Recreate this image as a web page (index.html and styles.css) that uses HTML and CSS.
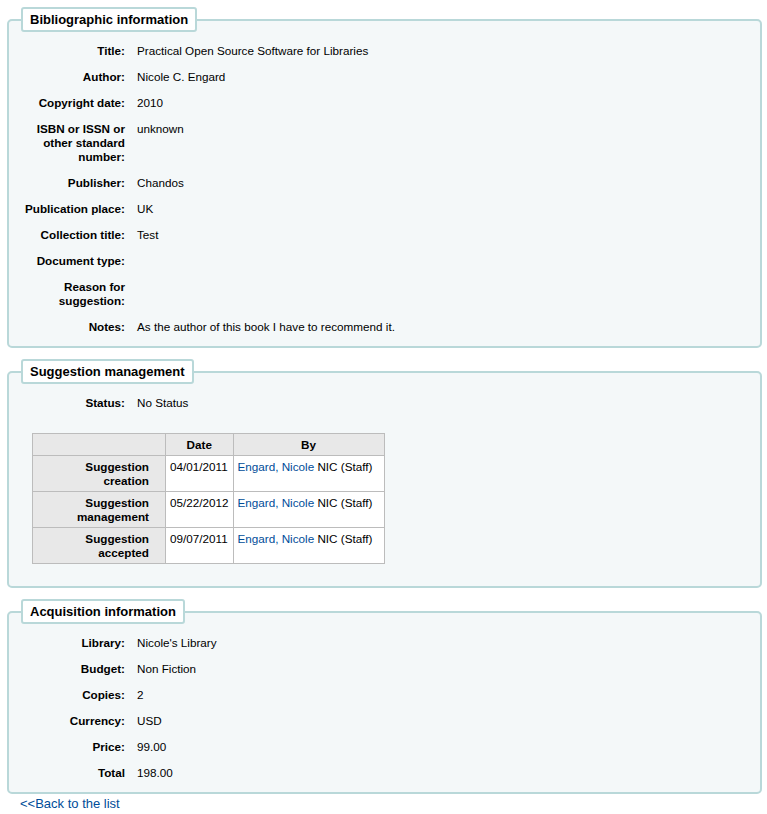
FILE: index.html
```html
<!DOCTYPE html>
<html>
<head>
  <title>Suggestion detail</title>
  <link rel="stylesheet" href="styles.css">
</head>
<body>
  <div class="page">
    <fieldset class="rows">
      <legend>Bibliographic information</legend>
      <ol>
        <li><span class="label">Title:</span><span>Practical Open Source Software for Libraries</span></li>
        <li><span class="label">Author:</span><span>Nicole C. Engard</span></li>
        <li><span class="label">Copyright date:</span><span>2010</span></li>
        <li><span class="label">ISBN or ISSN or other standard number:</span><span>unknown</span></li>
        <li><span class="label">Publisher:</span><span>Chandos</span></li>
        <li><span class="label">Publication place:</span><span>UK</span></li>
        <li><span class="label">Collection title:</span><span>Test</span></li>
        <li><span class="label">Document type:</span><span></span></li>
        <li><span class="label">Reason for suggestion:</span><span></span></li>
        <li><span class="label">Notes:</span><span>As the author of this book I have to recommend it.</span></li>
      </ol>
    </fieldset>

    <fieldset class="rows">
      <legend>Suggestion management</legend>
      <ol>
        <li><span class="label">Status:</span><span>No Status</span></li>
      </ol>
      <table class="history">
        <thead>
          <tr><th class="empty"></th><th>Date</th><th class="by">By</th></tr>
        </thead>
        <tbody>
          <tr>
            <th>Suggestion creation</th>
            <td>04/01/2011</td>
            <td><a href="#">Engard, Nicole</a> NIC (Staff)</td>
          </tr>
          <tr>
            <th>Suggestion management</th>
            <td>05/22/2012</td>
            <td><a href="#">Engard, Nicole</a> NIC (Staff)</td>
          </tr>
          <tr>
            <th>Suggestion accepted</th>
            <td>09/07/2011</td>
            <td><a href="#">Engard, Nicole</a> NIC (Staff)</td>
          </tr>
        </tbody>
      </table>
    </fieldset>

    <fieldset class="rows">
      <legend>Acquisition information</legend>
      <ol>
        <li><span class="label">Library:</span><span>Nicole's Library</span></li>
        <li><span class="label">Budget:</span><span>Non Fiction</span></li>
        <li><span class="label">Copies:</span><span>2</span></li>
        <li><span class="label">Currency:</span><span>USD</span></li>
        <li><span class="label">Price:</span><span>99.00</span></li>
        <li><span class="label">Total</span><span>198.00</span></li>
      </ol>
    </fieldset>

    <a class="back" href="#">&lt;&lt;Back to the list</a>
  </div>
</body>
</html>
```

FILE: styles.css
```css
body {
  margin: 0;
  font-family: "Liberation Sans", Arial, sans-serif;
  font-size: 11.7px;
  color: #000;
  background-color: white;
}
.page {
  padding: 7px 5px 0 7px;
}
a {
  color: #004d99;
  text-decoration: none;
}
fieldset.rows {
  margin: 0 0 11px 0;
  padding: 12px 12px 0 12px;
  border: 2px solid #b9d8d9;
  border-radius: 5px;
  background-color: #f4f8f9;
}
fieldset.rows legend {
  padding: 3px 7px;
  border: 2px solid #b9d8d9;
  border-radius: 3px;
  background-color: white;
  font-size: 13px;
  font-weight: bold;
  line-height: 15px;
}
fieldset.rows ol {
  list-style: none;
  margin: 0;
  padding: 0;
}
fieldset.rows li {
  display: flex;
  gap: 12px;
  line-height: 14px;
  margin-bottom: 12px;
}
fieldset.rows .label {
  flex: 0 0 104px;
  text-align: right;
  font-weight: bold;
}
table.history {
  border-collapse: collapse;
  margin: 23px 0 22px 11px;
  background-color: white;
  line-height: 14px;
}
table.history th,
table.history td {
  border: 1px solid #bcbcbc;
  padding: 4px 4px 3px 4px;
  vertical-align: top;
  text-align: left;
}
table.history th {
  background-color: #e8e8e8;
  font-weight: bold;
}
table.history thead th {
  text-align: center;
}
table.history thead th.empty {
  width: 100px;
}
table.history thead th.by {
  width: 142px;
}
table.history tbody th {
  width: 100px;
  padding: 4px 16px 3px 16px;
  text-align: right;
}
.back {
  display: block;
  margin: -9px 0 0 13px;
  font-size: 13px;
  line-height: 15px;
}
```
